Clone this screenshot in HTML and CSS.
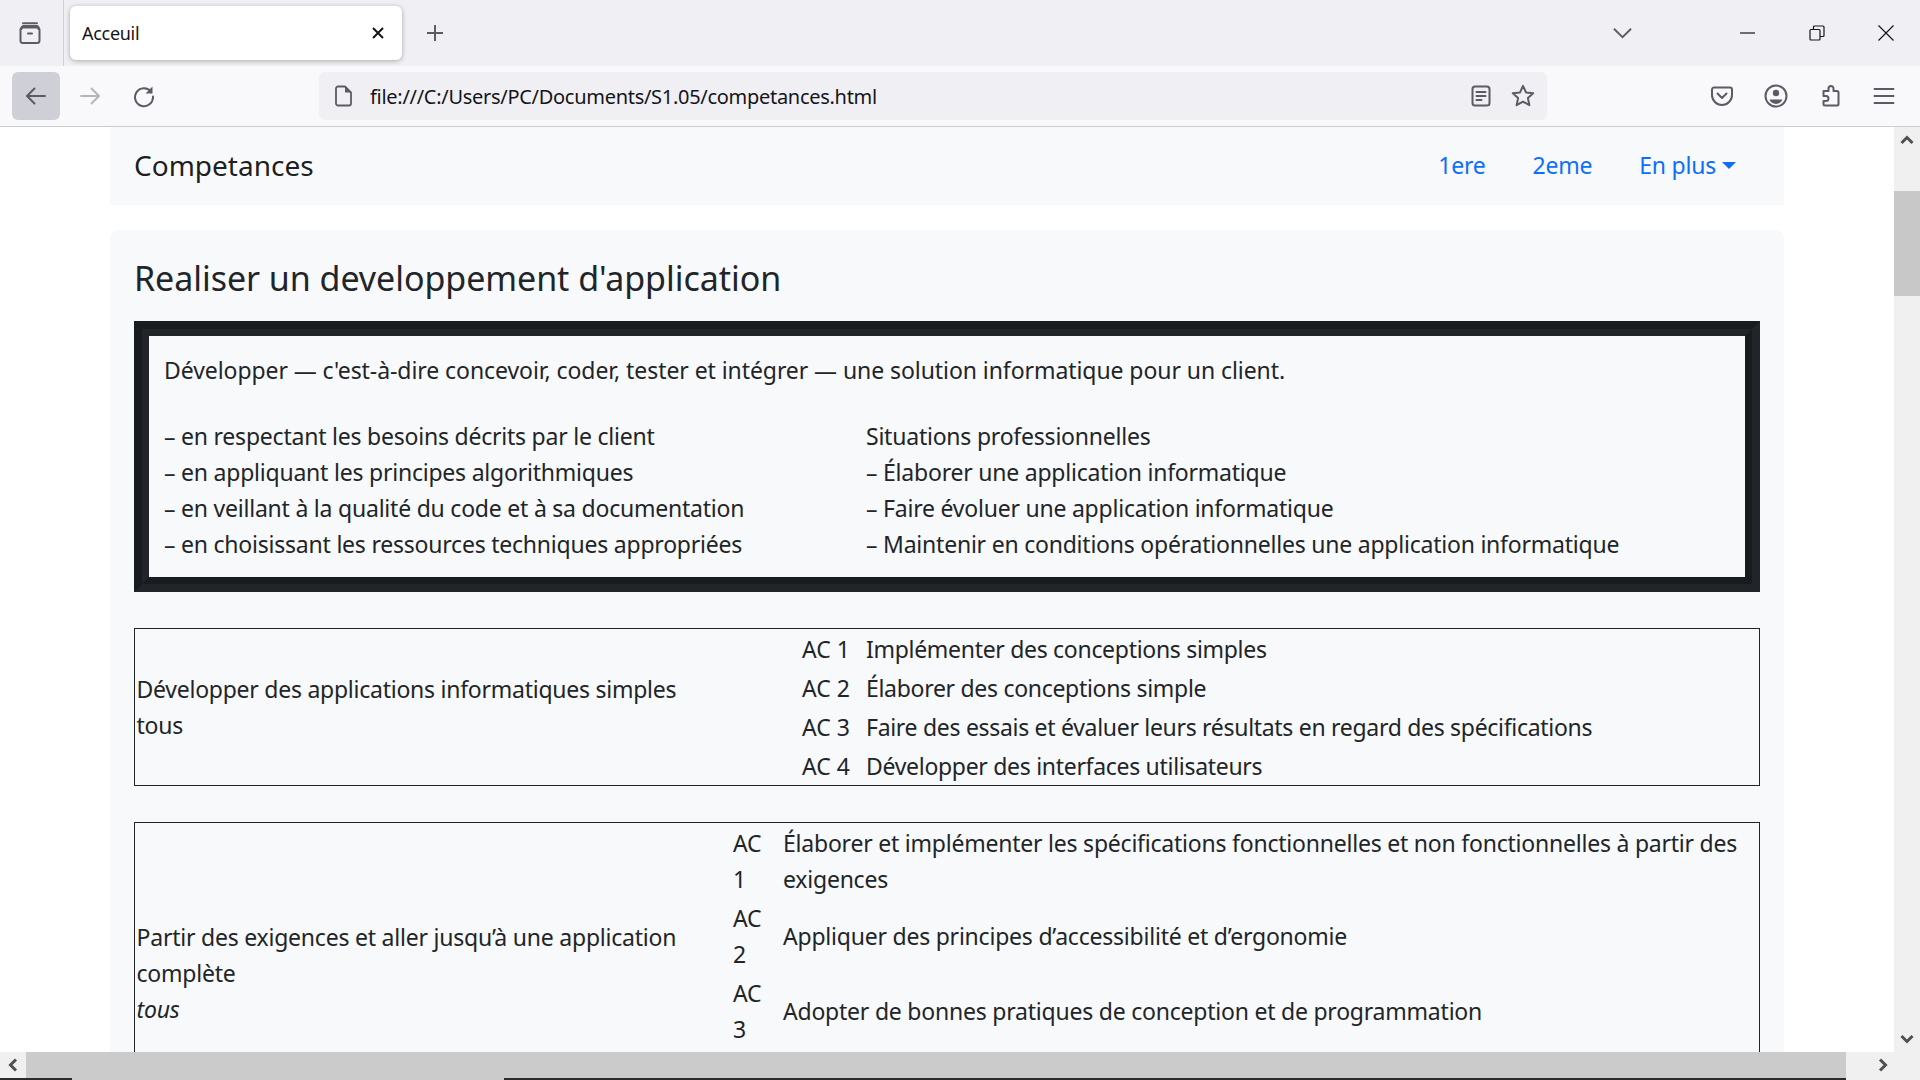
FILE: index.html

```html
<!DOCTYPE html>
<html lang="fr">
<head>
  <meta charset="UTF-8">
  <title>Acceuil</title>
  <link rel="stylesheet" href="styles.css">
</head>
<body>

  <div class="tabbar">
    <div class="view-btn">
      <svg class="icon" viewBox="0 0 24 24"><path d="M5 2.2h14"/><path d="M3.500 8V7a2 2 0 0 1 2-2h13a2 2 0 0 1 2 2v1"/><rect x="2.500" y="6.500" width="19" height="15.500" rx="2.500"/><path d="M10 12.500h4"/></svg>
    </div>
    <div class="tab">
      <span class="tab-title">Acceuil</span>
      <svg class="tab-close" viewBox="0 0 16 16"><path d="M3 3l10 10M13 3L3 13"/></svg>
    </div>
    <svg class="new-tab" viewBox="0 0 20 20"><path d="M10 2v16M2 10h16"/></svg>
    <svg class="tab-list" viewBox="0 0 20 12"><path d="M1 1.500l9 9 9-9"/></svg>
    <div class="win-btns">
      <svg class="win-icon" viewBox="0 0 16 16"><path d="M0 8h15"/></svg>
      <svg class="win-icon" viewBox="0 0 16 16"><rect x="1" y="4.500" width="10" height="10.500" rx="1"/><path d="M4.500 4.500V2a1 1 0 0 1 1-1H14a1 1 0 0 1 1 1v8.500a1 1 0 0 1-1 1h-3"/></svg>
      <svg class="win-icon" viewBox="0 0 16 16"><path d="M.5.5l15 15M15.500.5l-15 15"/></svg>
    </div>
  </div>

  <div class="toolbar">
    <div class="tool-btn active">
      <svg class="icon" viewBox="0 0 24 24"><path d="M21 12H3.500M10.500 4.500L3 12l7.500 7.500"/></svg>
    </div>
    <div class="tool-btn disabled">
      <svg class="icon" viewBox="0 0 24 24"><path d="M3 12h17.500M13.500 4.500L21 12l-7.500 7.500"/></svg>
    </div>
    <div class="tool-btn">
      <svg class="icon" viewBox="0 0 24 24"><path d="M19 7.500A9 9 0 1 0 21 12.500"/><path class="solid" d="M20.500 2.500v7h-7z"/></svg>
    </div>
    <div class="urlbar">
      <svg class="icon doc" viewBox="0 0 24 24"><path d="M7 2.500h7l6 6V19.500a2 2 0 0 1-2 2H7a2 2 0 0 1-2-2v-15a2 2 0 0 1 2-2z"/><path class="solid" d="M14 2.500l6 6h-6z"/></svg>
      <span class="url">file:///C:/Users/PC/Documents/S1.05/competances.html</span>
      <svg class="icon reader" viewBox="0 0 24 24"><rect x="3.500" y="2.500" width="17" height="19" rx="2.500"/><path d="M7.500 8h9M7.500 12h9M7.500 16h5"/></svg>
      <svg class="icon star" viewBox="0 0 24 24"><path d="M12 1.800l3 6.600 7.200.8-5.300 4.900 1.500 7.100-6.400-3.600-6.400 3.600 1.500-7.100-5.300-4.900 7.200-.8z"/></svg>
    </div>
    <div class="tool-btn">
      <svg class="icon" viewBox="0 0 24 24"><path d="M4 3.500h16a2 2 0 0 1 2 2V11a10 10 0 0 1-20 0V5.500a2 2 0 0 1 2-2z"/><path d="M7.500 9.500l4.500 4.500 4.500-4.500"/></svg>
    </div>
    <div class="tool-btn">
      <svg class="icon" viewBox="0 0 24 24"><circle cx="12" cy="12" r="10.500"/><circle class="solid" cx="12" cy="9" r="3.200"/><path class="solid" d="M5.500 15.500h13a7 7 0 0 1-13 0z"/></svg>
    </div>
    <div class="tool-btn">
      <svg class="icon" viewBox="0 0 24 24"><path d="M13 2a2.500 2.500 0 0 0-2.500 2.500V7H5.500v5H8a2.500 2.500 0 0 1 0 5H5.500v3a1.500 1.500 0 0 0 1.500 1.500h12a1.500 1.500 0 0 0 1.500-1.500V8.500A1.500 1.500 0 0 0 19 7h-3.500V4.500A2.500 2.500 0 0 0 13 2z"/></svg>
    </div>
    <div class="tool-btn">
      <svg class="icon" viewBox="0 0 24 24"><path d="M2.500 5h19M2.500 12h19M2.500 19h19"/></svg>
    </div>
  </div>

  <div class="viewport">
    <div class="page">
      <nav class="navbar">
        <span class="brand">Competances</span>
        <div class="nav-links">
          <a class="nav-link">1ere</a>
          <a class="nav-link">2eme</a>
          <a class="nav-link dropdown">En plus</a>
        </div>
      </nav>

      <div class="card">
        <h4>Realiser un developpement d'application</h4>

        <div class="ridge-box">
          <div class="ridge-inner">
            <p class="intro">Développer — c'est-à-dire concevoir, coder, tester et intégrer — une solution informatique pour un client.</p>
            <div class="box-cols">
              <div class="box-left">
                – en respectant les besoins décrits par le client<br>
                – en appliquant les principes algorithmiques<br>
                – en veillant à la qualité du code et à sa documentation<br>
                – en choisissant les ressources techniques appropriées
              </div>
              <div>
                Situations professionnelles<br>
                – Élaborer une application informatique<br>
                – Faire évoluer une application informatique<br>
                – Maintenir en conditions opérationnelles une application informatique
              </div>
            </div>
          </div>
        </div>

        <table class="ac-table first">
          <tr>
            <td class="title" rowspan="4">Développer des applications informatiques simples<br>tous</td>
            <td class="code">AC 1</td>
            <td>Implémenter des conceptions simples</td>
          </tr>
          <tr><td class="code">AC 2</td><td>Élaborer des conceptions simple</td></tr>
          <tr><td class="code">AC 3</td><td>Faire des essais et évaluer leurs résultats en regard des spécifications</td></tr>
          <tr><td class="code">AC 4</td><td>Développer des interfaces utilisateurs</td></tr>
        </table>

        <table class="ac-table second">
          <tr>
            <td class="title" rowspan="4">Partir des exigences et aller jusqu’à une application complète<br><em>tous</em></td>
            <td class="code">AC 1</td>
            <td>Élaborer et implémenter les spécifications fonctionnelles et non fonctionnelles à partir des exigences</td>
          </tr>
          <tr><td class="code">AC 2</td><td>Appliquer des principes d’accessibilité et d’ergonomie</td></tr>
          <tr><td class="code">AC 3</td><td>Adopter de bonnes pratiques de conception et de programmation</td></tr>
          <tr class="cut-row"><td class="code"></td><td></td></tr>
        </table>
      </div>
    </div>

    <div class="vscroll">
      <svg class="chev" viewBox="0 0 14 10"><path d="M1.500 8L7 2.500 12.500 8"/></svg>
      <div class="vthumb"></div>
      <svg class="chev bottom" viewBox="0 0 14 10"><path d="M1.500 2L7 7.500 12.500 2"/></svg>
    </div>
  </div>

  <div class="hscroll">
    <div class="hbtn"><svg class="chev side" viewBox="0 0 10 14"><path d="M8 1.500L2.500 7 8 12.500"/></svg></div>
    <div class="hthumb"></div>
    <div class="hbtn right"><svg class="chev side" viewBox="0 0 10 14"><path d="M2 1.500L7.500 7 2 12.500"/></svg></div>
  </div>

  <div class="bottom-strip">
    <div class="strip-a"></div>
    <div class="strip-b"></div>
    <div class="strip-c"></div>
    <div class="strip-d"></div>
  </div>

</body>
</html>
```

FILE: styles.css

```css
* {
  box-sizing: border-box;
}

html, body {
  margin: 0;
  height: 100%;
  overflow: hidden;
}

body {
  display: flex;
  flex-direction: column;
  width: 1920px;
  height: 1080px;
  font-family: "Noto Sans", sans-serif;
  font-size: 23px;
  line-height: 36px;
  letter-spacing: -0.22px;
  color: #212529;
  background: white;
}

/* browser chrome */
.icon {
  width: 24px;
  height: 24px;
  fill: none;
  stroke: #5b5b66;
  stroke-width: 2;
  stroke-linecap: round;
  stroke-linejoin: round;
}

.icon .solid {
  fill: #5b5b66;
  stroke: none;
}

.tabbar {
  display: flex;
  align-items: center;
  height: 66px;
  background: #f0f0f4;
}

.view-btn {
  display: flex;
  align-items: center;
  justify-content: center;
  width: 64px;
  height: 66px;
  padding-right: 3px;
  border-right: 1px solid #cfcfd8;
}

.tab {
  display: flex;
  align-items: center;
  justify-content: space-between;
  width: 332px;
  height: 54px;
  margin-left: 6px;
  padding: 0 16px 0 12px;
  background: white;
  border-radius: 6px;
  box-shadow: 0 1px 5px rgba(0,0,0,0.3);
}

.tab-title {
  font-size: 18px;
  letter-spacing: -0.3px;
  color: #15141a;
}

.tab-close {
  width: 16px;
  height: 16px;
  fill: none;
  stroke: #15141a;
  stroke-width: 2;
}

.new-tab {
  width: 20px;
  height: 20px;
  margin-left: 23px;
  fill: none;
  stroke: #5b5b66;
  stroke-width: 2;
}

.tab-list {
  width: 19px;
  height: 12px;
  margin-left: 1168px;
  fill: none;
  stroke: #5b5b66;
  stroke-width: 2;
}

.win-btns {
  display: flex;
  gap: 53px;
  margin-left: 108px;
}

.win-icon {
  width: 16px;
  height: 16px;
  fill: none;
  stroke: #15141a;
  stroke-width: 1.2;
}

.toolbar {
  display: flex;
  align-items: center;
  gap: 6px;
  height: 61px;
  padding: 0 12px 1px;
  background: #f9f9fb;
  border-bottom: 1px solid #ccc;
}

.tool-btn {
  display: flex;
  align-items: center;
  justify-content: center;
  width: 48px;
  height: 48px;
  border-radius: 6px;
}

.tool-btn.active {
  background: #cfcfd8;
}

.tool-btn.disabled .icon {
  stroke: #b5b5bb;
}

.urlbar {
  display: flex;
  align-items: center;
  flex: 1;
  height: 48px;
  margin: 0 145px;
  padding: 0 12px;
  background: #f0f0f4;
  border-radius: 6px;
}

.url {
  flex: 1;
  margin-left: 15px;
  padding-top: 2px;
  font-size: 20px;
  letter-spacing: -0.29px;
  color: #15141a;
}

.doc {
  stroke-width: 1.8;
}

.reader {
  margin-right: 18px;
}

/* page */
.viewport {
  display: flex;
  height: 925px;
  overflow: hidden;
}

.page {
  flex: 1;
  padding: 0 110px;
  overflow: hidden;
}

.navbar {
  display: flex;
  align-items: center;
  justify-content: space-between;
  height: 78px;
  padding: 0 48px 2px 24px;
  background: #f8f9fa;
}

.brand {
  font-size: 28px;
  letter-spacing: 0;
  color: rgba(0,0,0,0.9);
}

.nav-links {
  display: flex;
  gap: 47px;
}

.nav-link {
  color: #0d6efd;
}

.dropdown::after {
  content: "";
  display: inline-block;
  margin-left: 6px;
  vertical-align: 5px;
  border-top: 7px solid #0d6efd;
  border-left: 7px solid transparent;
  border-right: 7px solid transparent;
}

.card {
  margin-top: 25px;
  padding: 27px 24px 24px;
  background: #f8f9fa;
  border-radius: 9px;
}

h4 {
  margin: 0 0 21px;
  font-size: 34px;
  font-weight: 400;
  line-height: 43px;
  letter-spacing: -0.05px;
}

.ridge-box {
  border: 8px solid;
  border-color: #191c1f #212529 #212529 #191c1f;
}

.ridge-inner {
  padding: 16px 15px 15px;
  border: 7px solid;
  border-color: #212529 #191c1f #191c1f #212529;
}

.intro {
  margin: 0 0 30px;
  letter-spacing: -0.07px;
}

.box-cols {
  display: flex;
}

.box-left {
  width: 702px;
}

.ac-table {
  width: 100%;
  margin-top: 36px;
  table-layout: fixed;
  border-collapse: collapse;
  border: 1px solid #212529;
}

.ac-table td {
  padding: 1.500px;
  vertical-align: middle;
}

.first {
  letter-spacing: -0.3px;
}

.first .title {
  width: 666px;
  letter-spacing: -0.25px;
}

.first .code {
  width: 64px;
  letter-spacing: 0;
}

.second .title {
  width: 597px;
}

.second .code {
  width: 50px;
}

.cut-row td {
  height: 75px;
}

/* scrollbars */
.vscroll {
  display: flex;
  flex-direction: column;
  align-items: center;
  width: 26px;
  background: #f0f0f0;
}

.chev {
  width: 14px;
  height: 10px;
  margin-top: 8px;
  fill: none;
  stroke: #505050;
  stroke-width: 3;
}

.chev.bottom {
  margin-top: auto;
  margin-bottom: 8px;
}

.chev.side {
  width: 10px;
  height: 14px;
  margin: 0;
}

.vthumb {
  width: 100%;
  height: 105px;
  margin-top: 46px;
  background: #c8c8c8;
}

.hscroll {
  display: flex;
  height: 26px;
  background: #f0f0f0;
}

.hbtn {
  display: flex;
  align-items: center;
  justify-content: center;
  width: 26px;
}

.hbtn.right {
  width: 74px;
}

.hthumb {
  flex: 1;
  background: #cbcbcb;
}

.bottom-strip {
  display: flex;
  height: 2px;
}

.strip-a {
  width: 72px;
  background: #2b2b2b;
}

.strip-b {
  width: 432px;
  background: #cbcbcb;
}

.strip-c {
  width: 1342px;
  background: #2b2b2b;
}

.strip-d {
  flex: 1;
  background: #f0f0f0;
}
```
